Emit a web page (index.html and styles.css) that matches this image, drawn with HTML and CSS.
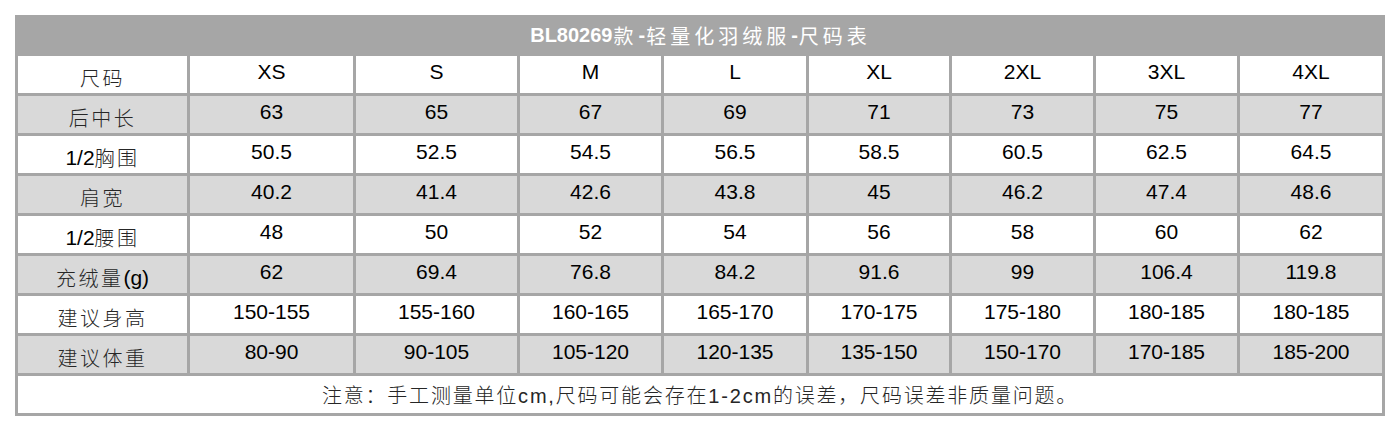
FILE: index.html
```html
<!DOCTYPE html>
<html lang="zh-CN">
<head>
<meta charset="utf-8">
<title>BL80269款-轻量化羽绒服-尺码表</title>
<link rel="stylesheet" href="styles.css">
</head>
<body>
<div class="sheet">
  <div class="title"><b>BL80269</b><span class="cj">款</span><b>-</b><span class="cj">轻量化羽绒服</span><b>-</b><span class="cj">尺码表</span></div>

  <div class="row">
    <div class="cell label">尺码</div>
    <div class="cell num">XS</div><div class="cell num">S</div><div class="cell num">M</div><div class="cell num">L</div>
    <div class="cell num">XL</div><div class="cell num">2XL</div><div class="cell num">3XL</div><div class="cell num">4XL</div>
  </div>
  <div class="row alt">
    <div class="cell label">后中长</div>
    <div class="cell num">63</div><div class="cell num">65</div><div class="cell num">67</div><div class="cell num">69</div>
    <div class="cell num">71</div><div class="cell num">73</div><div class="cell num">75</div><div class="cell num">77</div>
  </div>
  <div class="row">
    <div class="cell label"><span class="lat">1/2</span>胸围</div>
    <div class="cell num">50.5</div><div class="cell num">52.5</div><div class="cell num">54.5</div><div class="cell num">56.5</div>
    <div class="cell num">58.5</div><div class="cell num">60.5</div><div class="cell num">62.5</div><div class="cell num">64.5</div>
  </div>
  <div class="row alt">
    <div class="cell label">肩宽</div>
    <div class="cell num">40.2</div><div class="cell num">41.4</div><div class="cell num">42.6</div><div class="cell num">43.8</div>
    <div class="cell num">45</div><div class="cell num">46.2</div><div class="cell num">47.4</div><div class="cell num">48.6</div>
  </div>
  <div class="row">
    <div class="cell label"><span class="lat">1/2</span>腰围</div>
    <div class="cell num">48</div><div class="cell num">50</div><div class="cell num">52</div><div class="cell num">54</div>
    <div class="cell num">56</div><div class="cell num">58</div><div class="cell num">60</div><div class="cell num">62</div>
  </div>
  <div class="row alt">
    <div class="cell label">充绒量<span class="lat">(g)</span></div>
    <div class="cell num">62</div><div class="cell num">69.4</div><div class="cell num">76.8</div><div class="cell num">84.2</div>
    <div class="cell num">91.6</div><div class="cell num">99</div><div class="cell num">106.4</div><div class="cell num">119.8</div>
  </div>
  <div class="row">
    <div class="cell label">建议身高</div>
    <div class="cell num">150-155</div><div class="cell num">155-160</div><div class="cell num">160-165</div><div class="cell num">165-170</div>
    <div class="cell num">170-175</div><div class="cell num">175-180</div><div class="cell num">180-185</div><div class="cell num">180-185</div>
  </div>
  <div class="row alt">
    <div class="cell label">建议体重</div>
    <div class="cell num">80-90</div><div class="cell num">90-105</div><div class="cell num">105-120</div><div class="cell num">120-135</div>
    <div class="cell num">135-150</div><div class="cell num">150-170</div><div class="cell num">170-185</div><div class="cell num">185-200</div>
  </div>

  <div class="note">注意：手工测量单位cm,尺码可能会存在1-2cm的误差，尺码误差非质量问题。</div>
</div>
</body>
</html>
```

FILE: styles.css
```css
html, body {
  margin: 0;
  padding: 0;
  background: #ffffff;
}

body {
  padding: 15px;
  font-family: "Liberation Sans", "Noto Sans CJK SC", sans-serif;
}

.sheet {
  width: 1370px;
  box-sizing: border-box;
  padding: 3px;
  background: #a6a6a6;
  display: flex;
  flex-direction: column;
  gap: 3px;
}

.title {
  height: 35px;
  display: flex;
  align-items: center;
  justify-content: center;
  color: #ffffff;
  font-size: 20px;
}

.title b {
  font-weight: 700;
  padding: 0 1px;
}

.title .cj {
  font-weight: 400;
  letter-spacing: 4px;
}

.row {
  display: grid;
  grid-template-columns: 169px 163px 161px 141px 142px 140px 141px 141px 142px;
  gap: 3px;
  height: 37px;
}

.cell {
  background: #ffffff;
  display: flex;
  align-items: center;
  justify-content: center;
  box-sizing: border-box;
  color: #000000;
}

.row.alt .cell {
  background: #d9d9d9;
}

.num {
  font-size: 21px;
  padding-bottom: 5px;
}

.label {
  font-size: 20px;
  letter-spacing: 2.5px;
  color: #262626;
  font-weight: 300;
  padding-top: 6px;
}

.label .lat {
  letter-spacing: 0;
  color: #000000;
  font-weight: 400;
  font-size: 21px;
}

.note {
  height: 37px;
  background: #ffffff;
  display: flex;
  align-items: center;
  justify-content: center;
  font-size: 20px;
  letter-spacing: 1.8px;
  color: #262626;
  font-weight: 300;
}
```
